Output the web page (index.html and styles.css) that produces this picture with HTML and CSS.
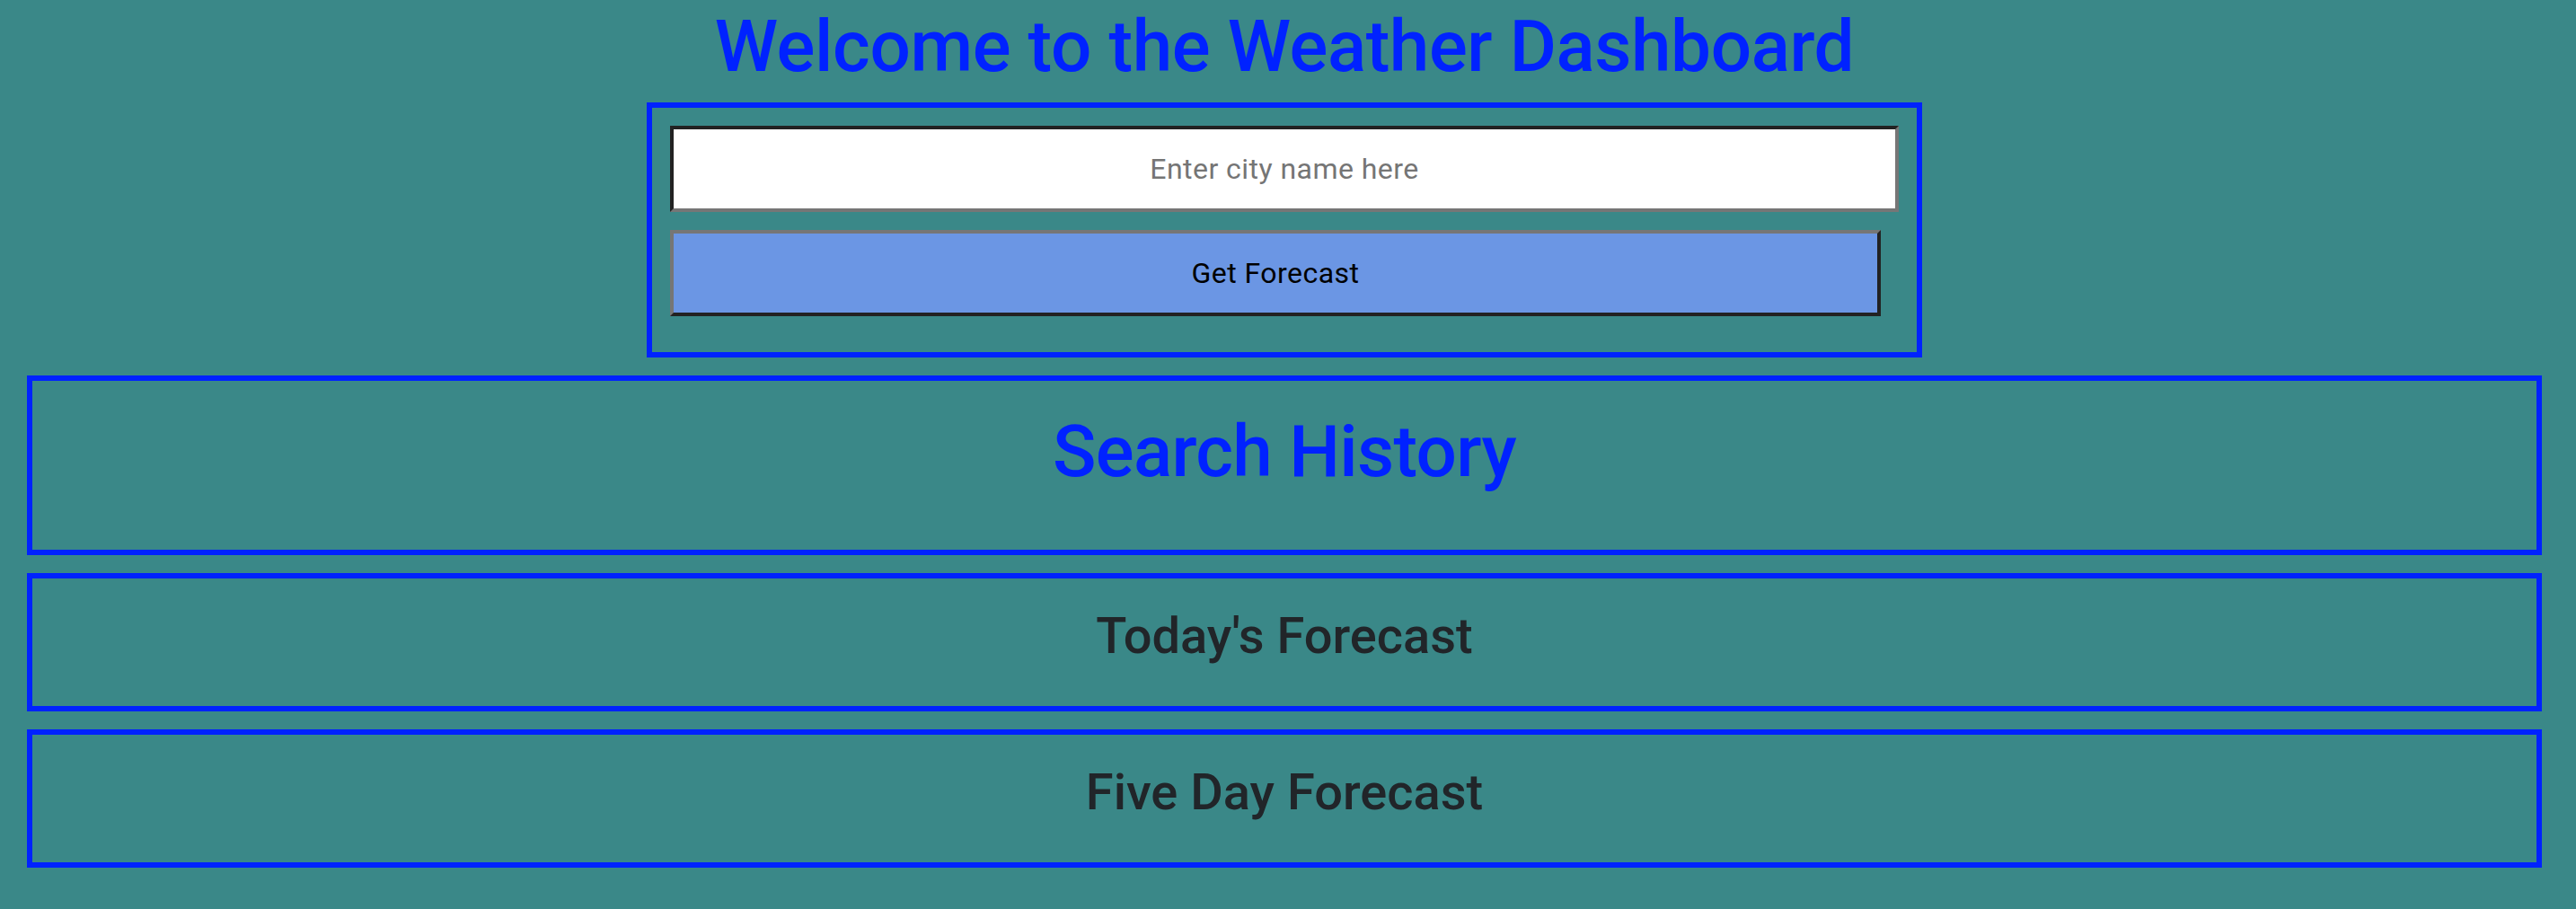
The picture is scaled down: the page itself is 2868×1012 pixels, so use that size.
FILE: index.html
```html
<!DOCTYPE html>
<html lang="en">
<head>
<meta charset="utf-8">
<title>Weather Dashboard</title>
<link rel="stylesheet" href="styles.css">
</head>
<body>
<h1 class="page-title">Welcome to the Weather Dashboard</h1>
<form class="search-box">
  <input class="city-input" type="text" placeholder="Enter city name here">
  <button class="search-btn" type="button">Get Forecast</button>
</form>
<section class="panel panel-history">
  <h2 class="history-title">Search History</h2>
</section>
<section class="panel panel-forecast">
  <h3 class="forecast-title">Today's Forecast</h3>
</section>
<section class="panel panel-forecast">
  <h3 class="forecast-title">Five Day Forecast</h3>
</section>
</body>
</html>
```

FILE: styles.css
```css
html, body {
  margin: 0;
  background: #3a8888;
}
body {
  padding: 0 38px 40px 30px;
  font-family: Roboto, "Noto Sans", sans-serif;
}
.page-title {
  margin: 4px 0 14px;
  font-family: Roboto, "Liberation Sans", sans-serif;
  font-weight: 500;
  font-size: 80px;
  line-height: 96px;
  letter-spacing: -0.4px;
  color: #0022ff;
  text-align: center;
}
.search-box {
  box-sizing: border-box;
  width: 1420px;
  margin: 0 auto;
  border: 6px solid #0022ff;
  padding: 20px 20px 40px;
  display: flex;
  flex-direction: column;
  gap: 20px;
}
.city-input {
  box-sizing: border-box;
  width: 100%;
  height: 96px;
  margin: 0;
  border-style: solid;
  border-width: 4px;
  border-color: #222222 #767676 #767676 #222222;
  background: #ffffff;
  font-family: Roboto, sans-serif;
  font-size: 32px;
  letter-spacing: 0.45px;
  color: #222;
  text-align: center;
  outline: none;
}
.city-input::placeholder {
  color: #757575;
}
.search-btn {
  box-sizing: border-box;
  width: calc(100% - 20px);
  height: 96px;
  margin: 0;
  border-style: solid;
  border-width: 4px;
  border-color: #767676 #222222 #222222 #767676;
  background: #6b96e4;
  font-family: Roboto, sans-serif;
  font-size: 32px;
  letter-spacing: 0.45px;
  color: #000000;
  text-align: center;
}
.panel {
  box-sizing: border-box;
  margin-top: 20px;
  border: 6px solid #0022ff;
  text-align: center;
}
.panel-history {
  height: 200px;
  padding-top: 31px;
}
.panel-forecast {
  height: 154px;
  padding-top: 31px;
}
.history-title {
  margin: 0;
  font-weight: 500;
  font-size: 80px;
  line-height: 96px;
  letter-spacing: -0.7px;
  color: #0022ff;
}
.forecast-title {
  margin: 0;
  font-weight: 500;
  font-size: 56px;
  line-height: 66px;
  color: #212529;
}
```
